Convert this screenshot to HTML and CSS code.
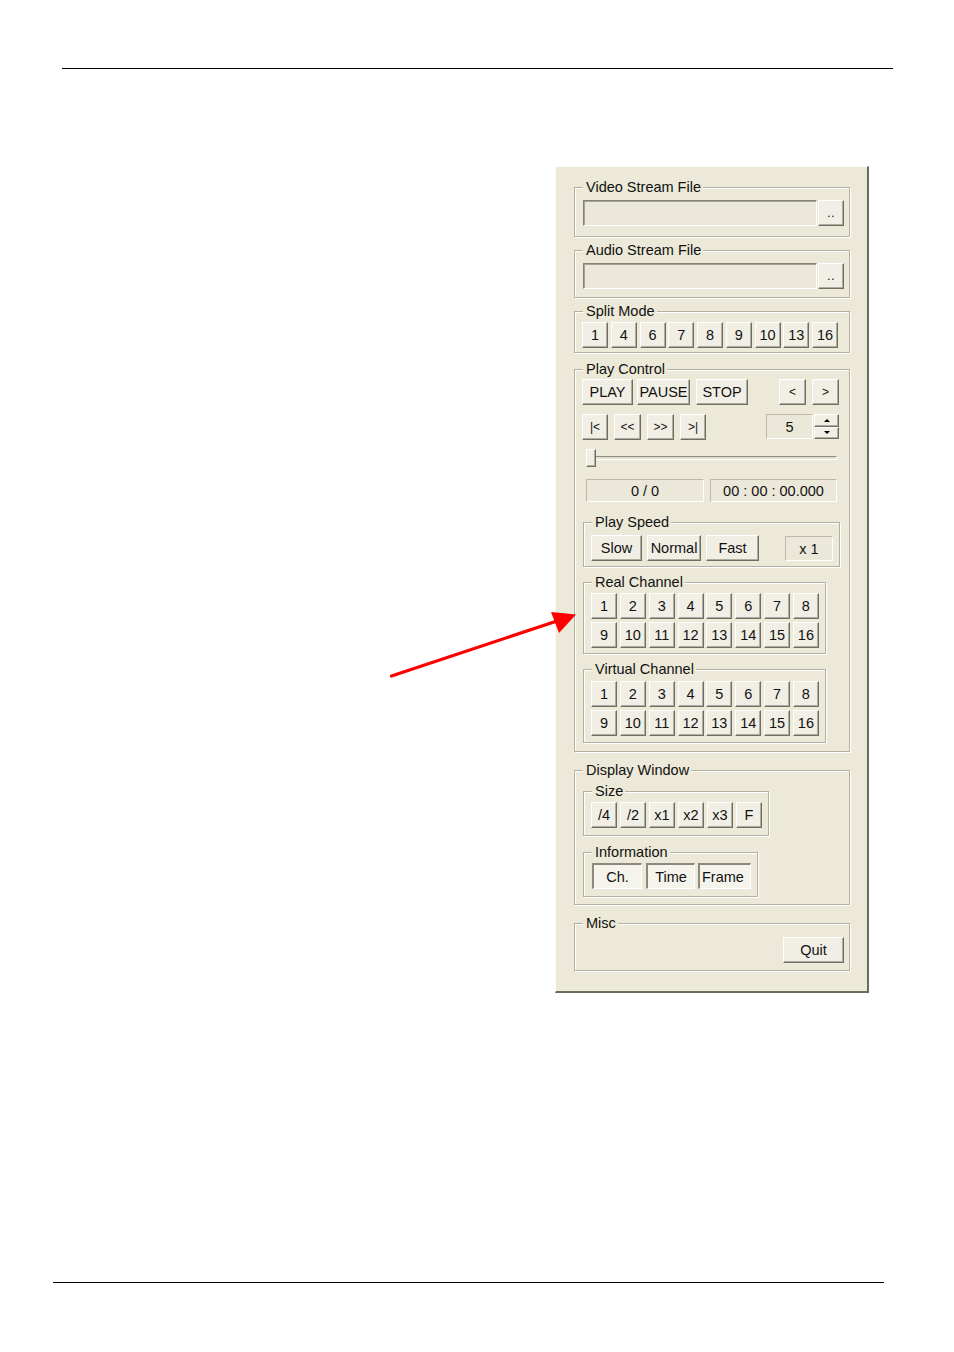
FILE: index.html
```html
<!DOCTYPE html>
<html>
<head>
<meta charset="utf-8">
<title>Player Control Panel</title>
<link rel="stylesheet" href="styles.css">
</head>
<body>
<div class="rule rule-top"></div>

<div class="panel">
  <div class="group g-video">
    <span class="legend">Video Stream File</span>
    <div class="path-input"></div>
    <button class="btn btn-browse"><span class="dots">..</span></button>
  </div>

  <div class="group g-audio">
    <span class="legend">Audio Stream File</span>
    <div class="path-input"></div>
    <button class="btn btn-browse"><span class="dots">..</span></button>
  </div>

  <div class="group g-split">
    <span class="legend">Split Mode</span>
    <button class="btn sq">1</button>
    <button class="btn sq">4</button>
    <button class="btn sq">6</button>
    <button class="btn sq">7</button>
    <button class="btn sq">8</button>
    <button class="btn sq">9</button>
    <button class="btn sq">10</button>
    <button class="btn sq">13</button>
    <button class="btn sq">16</button>
  </div>

  <div class="group g-play">
    <span class="legend">Play Control</span>
    <div class="row row1">
      <button class="btn b-play">PLAY</button>
      <button class="btn b-pause">PAUSE</button>
      <button class="btn b-stop">STOP</button>
      <button class="btn b-prev small-glyph">&lt;</button>
      <button class="btn b-next small-glyph">&gt;</button>
    </div>
    <div class="row row2">
      <button class="btn b-nav small-glyph">|&lt;</button>
      <button class="btn b-nav w27 small-glyph">&lt;&lt;</button>
      <button class="btn b-nav w27 small-glyph">&gt;&gt;</button>
      <button class="btn b-nav small-glyph">&gt;|</button>
      <div class="field step-field">5</div>
      <div class="spinner">
        <button class="btn spin"><span class="tri-up"></span></button>
        <button class="btn spin"><span class="tri-down"></span></button>
      </div>
    </div>
    <div class="slider">
      <div class="track"></div>
      <div class="thumb"></div>
    </div>
    <div class="row fields">
      <div class="field f-count">0 / 0</div>
      <div class="field f-time">00 : 00 : 00.000</div>
    </div>

    <div class="group g-speed">
      <span class="legend">Play Speed</span>
      <button class="btn b-slow">Slow</button>
      <button class="btn b-normal">Normal</button>
      <button class="btn b-fast">Fast</button>
      <div class="field f-rate">x 1</div>
    </div>

    <div class="group g-chan g-real">
      <span class="legend">Real Channel</span>
      <div class="chan-grid">
        <button class="btn sq">1</button><button class="btn sq">2</button><button class="btn sq">3</button><button class="btn sq">4</button>
        <button class="btn sq">5</button><button class="btn sq">6</button><button class="btn sq">7</button><button class="btn sq">8</button>
        <button class="btn sq">9</button><button class="btn sq">10</button><button class="btn sq">11</button><button class="btn sq">12</button>
        <button class="btn sq">13</button><button class="btn sq">14</button><button class="btn sq">15</button><button class="btn sq">16</button>
      </div>
    </div>

    <div class="group g-chan g-virtual">
      <span class="legend">Virtual Channel</span>
      <div class="chan-grid">
        <button class="btn sq">1</button><button class="btn sq">2</button><button class="btn sq">3</button><button class="btn sq">4</button>
        <button class="btn sq">5</button><button class="btn sq">6</button><button class="btn sq">7</button><button class="btn sq">8</button>
        <button class="btn sq">9</button><button class="btn sq">10</button><button class="btn sq">11</button><button class="btn sq">12</button>
        <button class="btn sq">13</button><button class="btn sq">14</button><button class="btn sq">15</button><button class="btn sq">16</button>
      </div>
    </div>
  </div>

  <div class="group g-display">
    <span class="legend">Display Window</span>
    <div class="group g-size">
      <span class="legend">Size</span>
      <button class="btn sq">/4</button>
      <button class="btn sq">/2</button>
      <button class="btn sq">x1</button>
      <button class="btn sq">x2</button>
      <button class="btn sq">x3</button>
      <button class="btn sq">F</button>
    </div>
    <div class="group g-info">
      <span class="legend">Information</span>
      <div class="toggle t-ch">Ch.</div>
      <div class="toggle t-time">Time</div>
      <div class="toggle t-frame">Frame</div>
    </div>
  </div>

  <div class="group g-misc">
    <span class="legend">Misc</span>
    <button class="btn b-quit">Quit</button>
  </div>
</div>

<div class="rule rule-bottom"></div>

<svg class="arrow" width="200" height="80" viewBox="0 0 200 80" xmlns="http://www.w3.org/2000/svg">
  <line x1="6.5" y1="71" x2="172" y2="16" stroke="#ff0000" stroke-width="3.2" stroke-linecap="round"/>
  <polygon points="166,7 191,9.5 174,28" fill="#ff0000"/>
</svg>
</body>
</html>
```

FILE: styles.css
```css
* {
  box-sizing: border-box;
}

html, body {
  margin: 0;
  padding: 0;
  background: #ffffff;
}

body {
  position: relative;
  width: 954px;
  min-height: 1352px;
  font-family: "Liberation Sans", Arial, sans-serif;
  overflow: hidden;
}

.rule {
  height: 1px;
  background: #000000;
  width: 831px;
}

.rule-top {
  margin: 68px 0 0 62px;
}

.rule-bottom {
  margin: 289px 0 0 53px;
}

/* ---------- window panel ---------- */
.panel {
  margin: 97px 0 0 555px;
  width: 314px;
  background: #ece9d8;
  border-style: solid;
  border-width: 1px 2px 2px 1px;
  border-color: #fbfaf4 #6b6b5e #6b6b5e #fbfaf4;
  padding: 20px 17px 20px 18px;
  font-size: 14.5px;
  letter-spacing: 0;
  color: #111111;
}

.group {
  position: relative;
  border: 1px solid #b3b0a0;
  box-shadow: inset 1px 1px 0 #ffffff, 1px 1px 0 #ffffff;
}

.legend {
  position: absolute;
  top: -9px;
  left: 8px;
  padding: 0 2px 0 3px;
  background: #ece9d8;
  line-height: 16px;
  white-space: nowrap;
}

/* ---------- buttons ---------- */
.btn {
  appearance: none;
  margin: 0;
  padding: 0;
  font: inherit;
  letter-spacing: inherit;
  color: #111111;
  height: 26px;
  background: #f1efe5;
  border-style: solid;
  border-width: 1px;
  border-color: #ffffff #6f6e62 #6f6e62 #ffffff;
  box-shadow: inset -1px -1px 0 #aeac9e;
  display: flex;
  align-items: center;
  justify-content: center;
  line-height: 1;
  white-space: nowrap;
}

.sq {
  width: 26px;
}

.small-glyph {
  font-size: 12px;
}

/* ---------- fields ---------- */
.path-input {
  width: 234px;
  height: 26px;
  background: #ebe8da;
  border-style: solid;
  border-width: 1px;
  border-color: #838173 #ffffff #ffffff #838173;
  box-shadow: inset 1px 1px 0 #a5a395;
}

.btn-browse {
  width: 26px;
  align-items: flex-end;
}

.dots {
  font-size: 13px;
  line-height: 1;
  padding-bottom: 6px;
  letter-spacing: 0.5px;
}

.field {
  height: 23px;
  background: #ebe8da;
  border-style: solid;
  border-width: 1px;
  border-color: #bcb9aa #ffffff #ffffff #bcb9aa;
  display: flex;
  align-items: center;
  justify-content: center;
}

/* ---------- video / audio / split ---------- */
.g-video,
.g-audio {
  display: flex;
  gap: 1px;
  padding: 12px 5px 10px 8px;
}

.g-audio {
  margin-top: 13px;
  padding-bottom: 8px;
}

.g-split {
  margin-top: 13px;
  display: flex;
  gap: 2.75px;
  padding: 10px 11px 4px 7px;
}

/* ---------- play control ---------- */
.g-play {
  margin-top: 16px;
  padding: 9px 9px 8px 7px;
}

.row {
  display: flex;
  align-items: flex-start;
}

.b-play { width: 51px; }
.b-pause { width: 53px; margin-left: 4px; }
.b-stop { width: 52px; margin-left: 6px; }
.b-prev { width: 27px; margin-left: auto; }
.b-next { width: 27px; margin-left: 6px; margin-right: 1px; }

.row2 {
  margin-top: 9px;
  height: 26px;
}

.b-nav { width: 26px; }
.b-nav + .b-nav { margin-left: 6px; }
.w27 { width: 27px; }

.step-field {
  width: 47px;
  height: 25px;
  margin-left: auto;
}

.spinner {
  width: 25px;
  height: 25px;
  margin-left: 1px;
  margin-right: 1px;
  display: flex;
  flex-direction: column;
}

.spin {
  width: 25px;
  height: 12.5px;
}

.tri-up,
.tri-down {
  width: 0;
  height: 0;
  border-left: 3px solid transparent;
  border-right: 3px solid transparent;
}

.tri-up {
  border-bottom: 3px solid #000000;
}

.tri-down {
  border-top: 3px solid #000000;
}

.slider {
  position: relative;
  margin-top: 9px;
  height: 18px;
  display: flex;
  align-items: center;
}

.track {
  margin-left: 4px;
  width: 251px;
  height: 4px;
  border-style: solid;
  border-width: 1px;
  border-color: #8f8d80 #ffffff #ffffff #8f8d80;
  background: #e2dfd0;
}

.thumb {
  position: absolute;
  left: 4px;
  top: 0;
  width: 10px;
  height: 18px;
  background: #f1efe5;
  border-style: solid;
  border-width: 1px;
  border-color: #ffffff #6f6e62 #6f6e62 #ffffff;
  box-shadow: inset -1px -1px 0 #aeac9e;
}

.fields {
  margin-top: 12px;
  margin-left: 4px;
}

.f-count { width: 118px; }
.f-time { width: 127px; margin-left: 6px; }

.g-speed {
  margin-top: 20px;
  margin-left: 1px;
  width: 257px;
  display: flex;
  align-items: flex-start;
  padding: 12px 6px 5px 7px;
}

.b-slow { width: 51px; }
.b-normal { width: 54px; margin-left: 5px; }
.b-fast { width: 53px; margin-left: 5px; }

.f-rate {
  width: 48px;
  height: 25px;
  margin-left: auto;
  margin-top: 1px;
}

.g-chan {
  margin-top: 15px;
  margin-left: 1px;
  width: 243px;
  padding: 10px 4px 5px 7px;
}

.g-virtual {
  padding-top: 11px;
  padding-bottom: 6px;
}

.chan-grid {
  display: grid;
  grid-template-columns: repeat(8, 26px);
  column-gap: 2.85px;
  row-gap: 3px;
}

/* ---------- display window ---------- */
.g-display {
  margin-top: 18px;
  padding: 20px 8px 7px 8px;
}

.g-size {
  width: 186px;
  display: flex;
  gap: 3px;
  padding: 10px 6px 7px 7px;
}

.g-info {
  margin-top: 16px;
  width: 175px;
  display: flex;
  padding: 10px 6px 7px 8px;
}

.toggle {
  height: 26px;
  background: #f4f3ec;
  border-style: solid;
  border-width: 2px 1px 1px 2px;
  border-color: #8c8a7c #ffffff #ffffff #8c8a7c;
  display: flex;
  align-items: center;
  justify-content: center;
}

.t-ch { width: 50px; }
.t-time { width: 49px; margin-left: 4px; }
.t-frame { width: 53px; margin-left: 3px; justify-content: flex-start; padding-left: 2px; }

/* ---------- misc ---------- */
.g-misc {
  margin-top: 18px;
  display: flex;
  justify-content: flex-end;
  padding: 13px 5px 7px 8px;
}

.b-quit {
  width: 61px;
}

/* ---------- annotation arrow ---------- */
.arrow {
  position: absolute;
  left: 385px;
  top: 605px;
}
```
